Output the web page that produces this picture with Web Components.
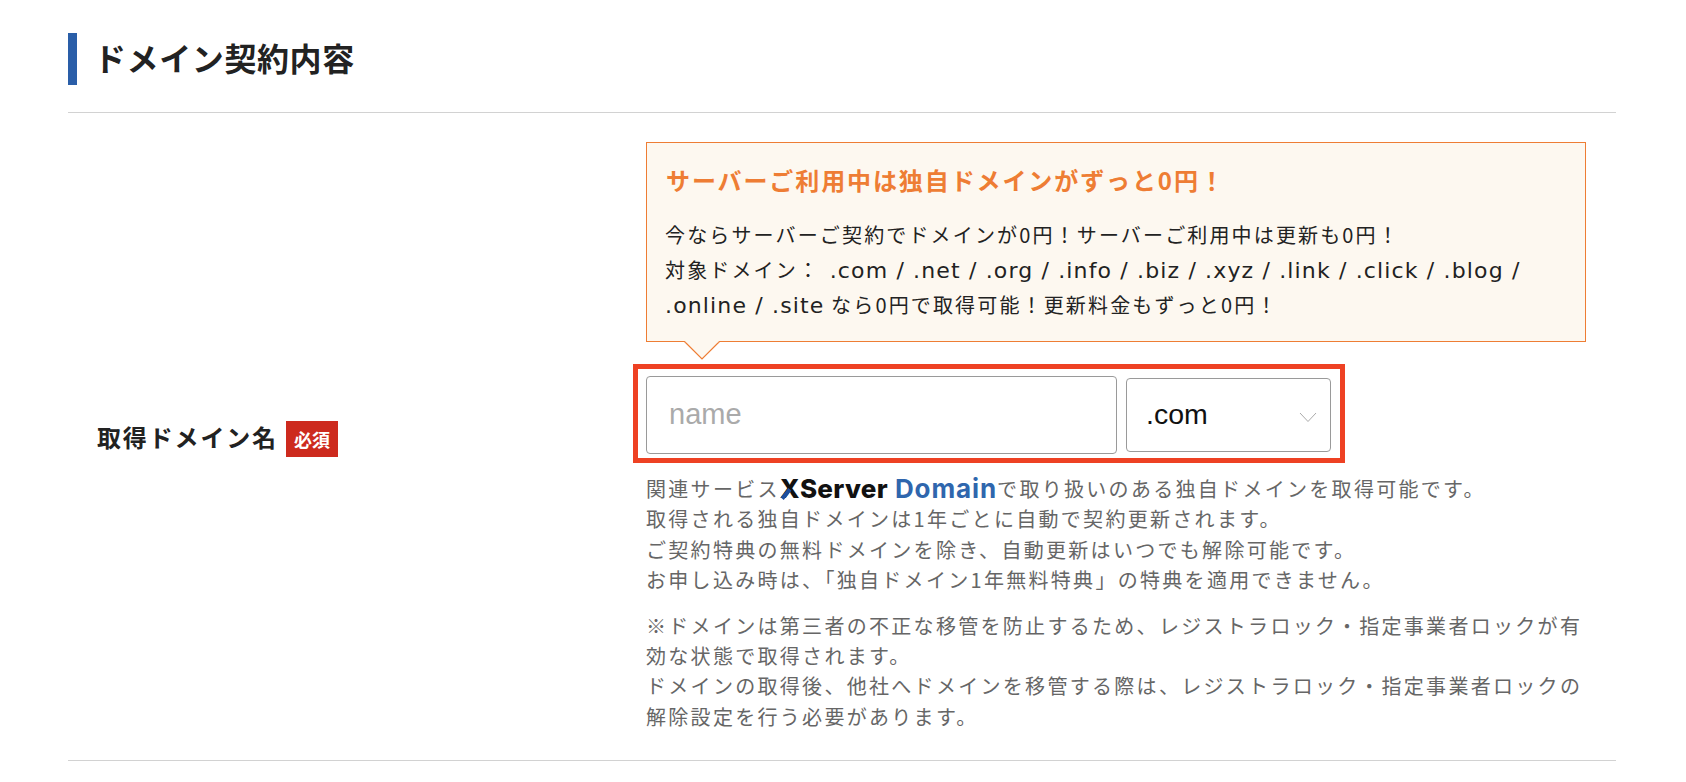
<!DOCTYPE html>
<html lang="ja"><head><meta charset="utf-8">
<style>
html,body{margin:0;padding:0;background:#fff}
body{width:1686px;height:782px;overflow:hidden;font-family:"Noto Sans CJK JP","Noto Sans",sans-serif;color:#222}
</style></head><body>
<order-section heading="ドメイン契約内容">
  <form-row>
    <span slot="label">取得ドメイン名</span>
    <promo-callout heading="サーバーご利用中は独自ドメインがずっと0円！">
      今ならサーバーご契約でドメインが0円！サーバーご利用中は更新も0円！<br>
      対象ドメイン： <span class="d">.com / .net / .org / .info / .biz / .xyz / .link / .click / .blog /<br>.online / .site</span> なら0円で取得可能！更新料金もずっと0円！
    </promo-callout>
    <domain-picker placeholder="name" tld=".com"></domain-picker>
    <help-note>
      <p>関連サービス<brand-mark></brand-mark>で取り扱いのある独自ドメインを取得可能です。<br>
      取得される独自ドメインは1年ごとに自動で契約更新されます。<br>
      ご契約特典の無料ドメインを除き、自動更新はいつでも解除可能です。<br>
      お申し込み時は、「独自ドメイン1年無料特典」の特典を適用できません。</p>
      <p>※ドメインは第三者の不正な移管を防止するため、レジストラロック・指定事業者ロックが有効な状態で取得されます。<br>
      ドメインの取得後、他社へドメインを移管する際は、レジストラロック・指定事業者ロックの解除設定を行う必要があります。</p>
    </help-note>
  </form-row>
</order-section>
<script>
function def(name, html, init){
  customElements.define(name, class extends HTMLElement{
    constructor(){super();this.attachShadow({mode:'open'}).innerHTML=html;}
    connectedCallback(){ if(init) init(this, this.shadowRoot); }
  });
}
const CJK='"Noto Sans CJK JP","Noto Sans",sans-serif';
def('order-section',`<style>
:host{display:block;padding:33px 70px 0 68px;font-family:${CJK}}
h2{margin:0;box-sizing:border-box;height:52px;display:flex;align-items:center;border-left:9px solid #2a5ea8;padding:0 0 4px 17px;font-size:32px;line-height:48px;font-weight:700;color:#222;letter-spacing:.6px}
.rule{height:1px;background:#d2d2d2;margin-top:27px}
.foot{height:1px;background:#d2d2d2}
</style><h2></h2><div class="rule"></div><slot></slot><div class="foot"></div>`,
(el,s)=>{s.querySelector('h2').textContent=el.getAttribute('heading')});

def('form-row',`<style>
:host{display:grid;grid-template-columns:578px 940px;height:647px;font-family:${CJK}}
.l{align-self:start;display:flex;align-items:center;gap:8px;padding:308px 0 0 29px;font-size:24px;font-weight:700;letter-spacing:1.85px;color:#222;height:36px;line-height:36px}
::slotted(span){margin-bottom:5px}
.b{width:52px;height:36px;background:#cd2a1e;color:#fff;font-size:18px;font-weight:700;letter-spacing:0;display:flex;align-items:center;justify-content:center;line-height:1}
.c{display:flex;flex-direction:column;padding-top:29px}
</style><div class="l"><slot name="label"></slot><span class="b">必須</span></div><div class="c"><slot></slot></div>`);

def('promo-callout',`<style>
:host{display:block;position:relative;box-sizing:border-box;width:940px;height:200px;background:#fdf8f0;border:1px solid #ee7d34;padding:19px 19px 0 19px;font-family:${CJK};color:#222}
h3{margin:0;font-size:24px;line-height:36px;font-weight:700;color:#ee7d34;letter-spacing:1.9px}
div.t{margin:20px 0 0 -1px;font-size:20px;line-height:34.5px;letter-spacing:2.15px}
svg{position:absolute;left:37px;top:198px}
::slotted(.d){font-family:"DejaVu Sans",sans-serif;font-size:22px;letter-spacing:1.15px;margin-left:3px}
</style><h3></h3><div class="t"><slot></slot></div>
<svg width="36" height="20" viewBox="0 0 36 20"><path d="M0.5 0.5 L18 18 L35.5 0.5" fill="#fdf8f0" stroke="#ee7d34" stroke-width="1.2"/><rect x="1.5" y="0" width="33" height="1.2" fill="#fdf8f0"/></svg>`,
(el,s)=>{s.querySelector('h3').textContent=el.getAttribute('heading')});

def('domain-picker',`<style>
:host{display:flex;align-items:center;gap:9px;box-sizing:border-box;width:712px;height:99px;margin:22px 0 0 -13px;border:5px solid #ee4123;padding:7px 9px 4px 8px;font-family:"Liberation Sans",Arial,sans-serif}
.i{box-sizing:border-box;width:471px;height:78px;border:1px solid #9a9a9a;border-radius:4px;display:flex;align-items:center;padding:0 0 2px 22px;font-size:29px;color:#aaa}
.s{box-sizing:border-box;width:205px;height:74px;border:1px solid #9a9a9a;border-radius:4px;display:flex;align-items:center;justify-content:space-between;padding:0 13px 0 19px;font-size:28.5px;color:#111}
.v{margin-bottom:2px}
svg{display:block;margin-top:5px}
</style><div class="i"></div><div class="s"><span class="v"></span><svg width="18" height="11" viewBox="0 0 18 11"><path d="M1 1 L9 9.5 L17 1" fill="none" stroke="#aaa" stroke-width="1"/></svg></div>`,
(el,s)=>{s.querySelector('.i').textContent=el.getAttribute('placeholder');s.querySelector('.v').textContent=el.getAttribute('tld')});

def('help-note',`<style>
:host{display:block;margin-top:11px;width:940px;font-family:${CJK};color:#666;font-size:20px;line-height:30.4px;letter-spacing:2.3px}
</style><slot></slot>`);

def('brand-mark',`<style>
:host{display:inline-block;font-family:Inter,"Liberation Sans",sans-serif;font-weight:800;font-size:26px;line-height:20px;letter-spacing:.3px;color:#111;vertical-align:-1px;word-spacing:1px}
i{font-style:normal;color:#2f66ad;font-weight:700;letter-spacing:.9px}
.x{position:relative;display:inline-block}
.x::after{content:"";position:absolute;left:4px;top:9px;width:4px;height:12px;background:#1d4f9e;transform:rotate(40deg)}
</style><span class="x">X</span><span>Server</span> <i>Domain</i>`);
</script>
<style>
help-note p{margin:0}
help-note p+p{margin-top:15px}
</style>
</body></html>
